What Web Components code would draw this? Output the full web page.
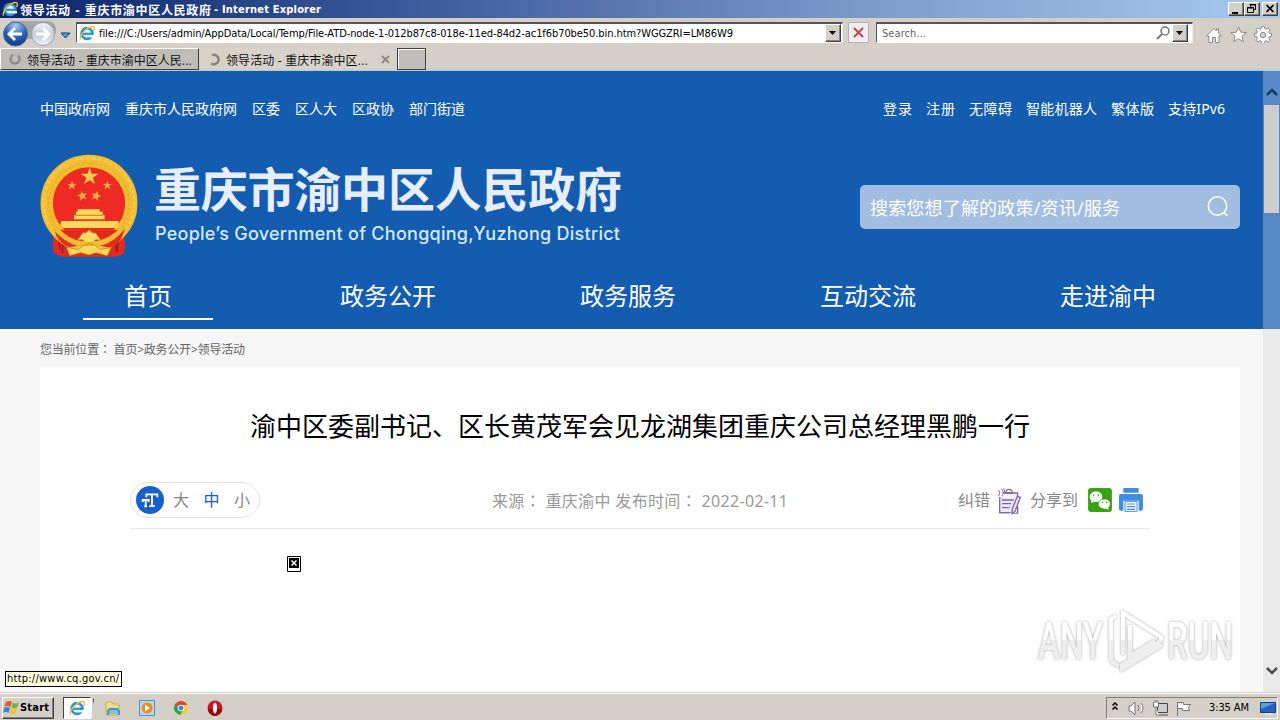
<!DOCTYPE html>
<html lang="zh-CN">
<head>
<meta charset="utf-8">
<title>领导活动 - 重庆市渝中区人民政府</title>
<style>
  html, body { margin: 0; width: 1280px; height: 720px; overflow: hidden; }
  body { background: #d4d0c8; }
</style>
</head>
<body>
<ie-window>
  <ie-titlebar slot="chrome"></ie-titlebar>
  <ie-addressbar slot="chrome"></ie-addressbar>
  <ie-tabstrip slot="chrome"></ie-tabstrip>
  <gov-page></gov-page>
  <page-scrollbar slot="over"></page-scrollbar>
  <run-watermark slot="over"></run-watermark>
  <status-tip slot="over">http://www.cq.gov.cn/</status-tip>
  <task-bar slot="taskbar"></task-bar>
</ie-window>

<script>
/**
 * Registers an element whose shadow root is cloned from the given markup.
 * @param {string} name
 * @param {string} html
 */
function component(name, html) {
  const template = document.createElement('template');
  template.innerHTML = html;
  customElements.define(name, class extends HTMLElement {
    constructor() {
      super();
      this.attachShadow({ mode: 'open' }).appendChild(template.content.cloneNode(true));
    }
  });
}

const ieLogo = /*html*/ `
  <svg viewBox="0 0 16 16" width="16" height="16">
    <circle cx="8" cy="8.6" r="5.4" fill="#e9f7ff" stroke="#2493dc" stroke-width="2.7"/>
    <path d="M4 8.8h9" stroke="#2493dc" stroke-width="2.2"/>
    <path d="M10 10.1h5v2.3h-5z" fill="#fff"/>
    <path d="M1.6 14.7C-.4 11 8.500 1 14 1.500c2 .3 1.500 3 .5 4.500" fill="none" stroke="#f2bd30" stroke-width="1.400"/>
  </svg>`;

component('ie-window', /*html*/ `
  <style>
    :host { display: flex; flex-direction: column; width: 1280px; height: 720px; position: relative; font-family: "DejaVu Sans Condensed", "Noto Sans CJK SC", sans-serif; font-size: 11px; }
    main { height: 621px; overflow: hidden; background: #f6f6f6; }
  </style>
  <slot name="chrome"></slot>
  <main><slot></slot></main>
  <slot name="over"></slot>
  <slot name="taskbar"></slot>
`);

component('ie-titlebar', /*html*/ `
  <style>
    :host { display: flex; align-items: center; height: 18px; box-sizing: border-box; padding: 0 2px 0 2px; gap: 2px; color: #fff; font-weight: bold; background: linear-gradient(90deg, #0a246a, #3f5f9f 35%, #7d9bcb 68%, #a6caf0); }
    .title { flex: 1; display: flex; align-items: center; gap: 3px; }
    .doc { font-size: 12px; }
    .buttons { display: flex; }
    i { box-sizing: border-box; width: 16px; height: 14px; background: #d4d0c8; border: 1px solid; border-color: #fff #404040 #404040 #fff; box-shadow: inset -1px -1px #808080; }
    i:last-child { margin-left: 2px; }
    svg { display: block; }
  </style>
  ${ieLogo}
  <div class="title">
    <fit-text class="doc" width="191">领导活动 - 重庆市渝中区人民政府</fit-text>
    <fit-text width="107">- Internet Explorer</fit-text>
  </div>
  <div class="buttons">
    <i><svg width="14" height="12"><path d="M3 9h6v2H3z"/></svg></i>
    <i><svg width="14" height="12" fill="none" stroke="#000"><path d="M5 2h6M5.500 1v3M4.500 1.500h6v5h-2M2.500 5h6M2.500 4.500h6v5h-6z"/></svg></i>
    <i><svg width="14" height="12"><path d="M3.500 2l7 7M10.500 2l-7 7" stroke="#000" stroke-width="1.700"/></svg></i>
  </div>
`);

component('ie-addressbar', /*html*/ `
  <style>
    :host { display: flex; align-items: center; height: 30px; box-sizing: border-box; padding: 0 7px 1px 2px; background: #d4d0c8; color: #000; }
    .nav { width: 74px; height: 28px; }
    .field { display: flex; align-items: center; box-sizing: border-box; height: 21px; background: #fff; border: 1px solid; border-color: #555 #eee #fff #555; border-top-width: 2px; padding: 0 1px 0 2px; }
    .address { width: 767px; gap: 4px; }
    .search { width: 317px; margin-left: 7px; padding: 0 4px 0 5px; color: #666; }
    .grow { flex: 1; }
    .drop { box-sizing: border-box; width: 16px; height: 18px; background: #d4d0c8; border: 1px solid; border-color: #fff #404040 #404040 #fff; box-shadow: inset -1px -1px #888; }
    .stop { box-sizing: border-box; width: 21px; height: 21px; background: #eeeef0; border: 1px solid #b4b4b8; margin-left: 5px; }
    svg { display: block; flex: none; }
    .tools { margin-left: 12px; }
  </style>
  <svg class="nav" viewBox="0 18 74 28">
    <defs><radialGradient id="b" cx=".5" cy=".15" r=".9"><stop offset="0" stop-color="#a8cdf2"/><stop offset=".5" stop-color="#2a68bd"/><stop offset="1" stop-color="#072f80"/></radialGradient>
    <linearGradient id="g" x2="0" y2="1"><stop offset="0" stop-color="#f6f6f6"/><stop offset=".5" stop-color="#c4ccd8"/><stop offset="1" stop-color="#eef4fb"/></linearGradient></defs>
    <path d="M9 20h36q10 0 9 12L44 38H18L2 32z" fill="#a5a6aa"/>
    <circle cx="13.500" cy="33" r="12" fill="url(#b)" stroke="#566c91"/>
    <path d="M20 33H8M13 27l-6 6 6 6" fill="none" stroke="#fff" stroke-width="2.800"/>
    <circle cx="41" cy="33" r="11.500" fill="url(#g)" stroke="#9a9fa8"/>
    <path d="M34 33h12M41 27l6 6-6 6" fill="none" stroke="#fff" stroke-width="3"/>
    <path d="M59 32h9l-4.500 5z" fill="#3f9fe8" stroke="#164478"/>
  </svg>
  <div class="field address">${ieLogo}
    <fit-text width="634">file:///C:/Users/admin/AppData/Local/Temp/File-ATD-node-1-012b87c8-018e-11ed-84d2-ac1f6b70be50.bin.htm?WGGZRI=LM86W9</fit-text>
    <span class="grow"></span>
    <svg class="drop" viewBox="0 0 14 16"><path d="M3 6h7l-3.500 4z"/></svg>
  </div>
  <svg class="stop" viewBox="0 0 19 19"><path d="M5 5l9 9M14 5l-9 9" stroke="#c9444d" stroke-width="2"/></svg>
  <div class="field search"><fit-text width="44">Search...</fit-text><span class="grow"></span>
    <svg width="16" height="16" fill="none" stroke="#777"><circle cx="9" cy="6" r="4" stroke-width="1.500"/><path d="M6 9l-5 5" stroke-width="2"/></svg>
    <svg class="drop" viewBox="0 0 14 16"><path d="M3 6h7l-3.500 4z"/></svg>
  </div>
  <svg class="tools" width="68" height="20" viewBox="0 0 68 20" fill="#fff" stroke="#8c8c8c">
    <path d="M1.500 13L9 5.500l2.500 2.500V6h2v4l3 3h-2.500v6.500h-3.500v-5H7.500v5H4V13z"/>
    <path d="M33.500 4l2.200 5.200 5.600.4-4.300 3.600 1.400 5.500-4.900-3-4.800 3 1.300-5.500-4.300-3.600 5.700-.4z"/>
    <path d="M56.700 4h2.600l.5 2.200 1.400.6 2-1.300 1.800 1.800-1.300 2 .6 1.400 2.200.5v2.600l-2.200.5-.6 1.400 1.300 2-1.800 1.800-2-1.300-1.400.6-.5 2.200h-2.600l-.5-2.200-1.400-.6-2 1.300-1.800-1.800 1.300-2-.6-1.400-2.200-.5v-2.600l2.200-.5.6-1.400-1.300-2 1.800-1.800 2 1.300 1.400-.6z" transform="translate(0 -.5)"/>
    <circle cx="58" cy="12" r="2.700" fill="#d4d0c8"/>
  </svg>
`);

component('ie-tabstrip', /*html*/ `
  <style>
    :host { display: flex; align-items: flex-start; height: 23px; box-sizing: border-box; background: #d4d0c8; border-bottom: 2px solid #b5cbe2; font-size: 12px; color: #111; }
    .tab { display: flex; align-items: center; box-sizing: border-box; height: 22px; gap: 5px; padding: 0 4px 0 8px; width: 199px; background: #c0bdb6; border: 1px solid; border-color: #fff #404040 #404040 #fff; }
    .active { background: #d9d2c9; border-color: #d4d0c8; width: 198px; }
    .new { width: 29px; height: 22px; box-sizing: border-box; background: #c0bdb6; border: 1px solid #404040; box-shadow: inset 1px 1px #fff; }
    svg { display: block; flex: none; }
    .close { margin-left: 8px; }
  </style>
  <div class="tab">
    <svg width="13" height="13" fill="none" stroke="#8b8b8b" stroke-width="2.500"><circle cx="6" cy="6" r="4.500"/><path d="M4 1.800A4.500 4.500 0 0 1 9 2.500" stroke="#c0bdb6"/></svg>
    <fit-text width="165">领导活动 - 重庆市渝中区人民...</fit-text>
  </div>
  <div class="tab active">
    <svg width="13" height="13" fill="none" stroke="#858585" stroke-width="2.500"><path d="M4 2.100A4.800 4.800 0 1 1 3 10.500"/></svg>
    <fit-text width="142">领导活动 - 重庆市渝中区...</fit-text>
    <svg class="close" width="10" height="10"><path d="M1 2l7 7M8 2l-7 7" stroke="#8a8a8a" stroke-width="2"/></svg>
  </div>
  <div class="new"></div>
`);

component('gov-links', /*html*/ `
  <style>
    :host { display: flex; gap: 15px; font-size: 14px; line-height: 20px; color: #fff; }
  </style>
  <slot></slot>
`);

component('gov-logo', /*html*/ `
  <style>
    :host { display: flex; gap: 16px; color: #e7edfa; }
    .names { padding-top: 6px; }
    .cn { font-size: 47px; line-height: 56px; font-weight: 700; }
    .en { font: 500 18px/24px Inter, sans-serif; color: #d6e9fc; margin: 5px 0 0 1px; }
    svg { display: block; margin-top: -1px; }
  </style>
  <svg width="98" height="105" viewBox="119 222 294 315">
    <path d="M165 440q-12 50-5 76 10 14 35 14h138q34 0 39-14 5-35-6-76z" fill="#e12a20"/>
    <path d="M171 462l9 48M188 485l-2 36M357 462l-8 55M343 485l8 32" stroke="#a51717" stroke-width="4"/>
    <circle cx="266" cy="370" r="127" fill="#ed2b24" stroke="#f2bd31" stroke-width="37"/>
    <circle cx="266" cy="370" r="136" fill="none" stroke="#f9ca48" stroke-width="8" stroke-dasharray="13 5"/>
    <circle cx="266" cy="370" r="121" fill="none" stroke="#e2aa22" stroke-width="3" stroke-dasharray="9 5"/>
    <path d="M268 263l6 18h20l-16 12 6 19-16-11-17 11 7-19-17-12h20z" fill="#f8cc50"/>
    <path d="M215 302l3 9 11 1-9 6 3 10-8-6-10 6 4-10-8-6h11zM322 303l2 9h11l-9 6 4 10-9-6-9 6 4-10-8-6 10-1zM244 333l5 9 11-2-7 8 6 10-11-4-8 8v-11l-10-5 11-3zM292 333l1 11 10 3-10 5v10l-8-8-10 4 5-10-6-8 10 2z" fill="#f6ad46"/>
    <path d="M232 388h66v7h9v10h6v13h-92v-13h6v-10h5zM183 423h172v11l-5 10H187l-7-10z" fill="#ffd85d"/>
    <path d="M225 406h83M219 419h93" stroke="#ce7a20" stroke-width="3"/>
    <path d="M161 447q53 7 105 7t107-7q-12 51-51 55l-56-10-58 10q-36-11-47-55z" fill="#e22c20"/>
    <path d="M171 440q30 37 75 44l20-10 20 10q46-9 76-44l10 8q-31 41-76 51l-30-8-32 8q-45-14-74-49z" fill="#f2bc32"/>
    <path d="M239 471l9-13 9 1 9-8 11 8h9l8 12 7 10q-18-7-22 6h-24q-7-14-24-5z" fill="#ffdd69" stroke="#d99b1f" stroke-width="2"/>
    <path d="M198 501l36 8 17-14h32l18 14 32-7-12 25-34-9-21 7-25-7-33 9z" fill="#ffd75d" stroke="#bc761c" stroke-width="2"/>
  </svg>
  <div class="names">
    <div class="cn"><fit-text width="468">重庆市渝中区人民政府</fit-text></div>
    <div class="en"><fit-text width="465">People’s Government of Chongqing,Yuzhong District</fit-text></div>
  </div>
`);

component('gov-search', /*html*/ `
  <style>
    :host { display: flex; align-items: center; justify-content: space-between; box-sizing: border-box; width: 380px; height: 44px; padding: 0 10px; border-radius: 5px; background: #a1bde0; color: #fff; font-size: 18px; line-height: 28px; }
    svg { display: block; }
    fit-text { position: relative; top: 1px; }
  </style>
  <fit-text width="250"><slot></slot></fit-text>
  <svg width="24" height="24" fill="none" stroke="#fff" stroke-width="1.500"><circle cx="11.500" cy="11" r="9.200"/><path d="M18 17.500l3.500 3.500"/></svg>
`);

component('gov-nav', /*html*/ `
  <style>
    :host { display: grid; grid-template-columns: repeat(5, 240px); padding-left: 28px; color: #fff; font-size: 24px; line-height: 38px; }
    ::slotted(*) { box-sizing: border-box; width: 130px; height: 43px; justify-self: center; text-align: center; white-space: nowrap; }
    ::slotted(.current) { border-bottom: 2px solid #fff; }
  </style>
  <slot></slot>
`);

component('gov-header', /*html*/ `
  <style>
    :host { display: block; height: 258px; background: #135cb0; }
    .top { display: flex; justify-content: space-between; padding: 28px 38px 0 40px; height: 55px; box-sizing: border-box; }
    .brand { display: flex; justify-content: space-between; padding: 29px 23px 0 40px; height: 151px; box-sizing: border-box; }
    gov-search { margin-top: 30px; }
    .right { gap: 14px; }
  </style>
  <div class="top">
    <gov-links>
      <fit-text width="70">中国政府网</fit-text><fit-text width="112">重庆市人民政府网</fit-text><fit-text width="28">区委</fit-text><fit-text width="42">区人大</fit-text><fit-text width="42">区政协</fit-text><fit-text width="56">部门街道</fit-text>
    </gov-links>
    <gov-links class="right">
      <fit-text width="29">登录</fit-text><fit-text width="29">注册</fit-text><fit-text width="43">无障碍</fit-text><fit-text width="71">智能机器人</fit-text><fit-text width="43">繁体版</fit-text><fit-text width="57">支持IPv6</fit-text>
    </gov-links>
  </div>
  <div class="brand"><gov-logo></gov-logo><gov-search>搜索您想了解的政策/资讯/服务</gov-search></div>
  <gov-nav><span class="current">首页</span><span>政务公开</span><span>政务服务</span><span>互动交流</span><span>走进渝中</span></gov-nav>
`);

component('font-sizer', /*html*/ `
  <style>
    :host { display: flex; align-items: center; box-sizing: border-box; width: 130px; height: 36px; padding: 0 5px; border: 1px solid #e4e4e4; border-radius: 18px; color: #888; font-size: 16px; line-height: 24px; }
    svg { display: block; margin-right: 9px; flex: none; }
    span { width: 30.500px; flex: none; }
    span:last-child { width: 16px; }
    .on { color: #135cd0; }
  </style>
  <svg width="28" height="28" viewBox="48 258 84 84"><circle cx="90" cy="300" r="42" fill="#1760cc"/>
    <path d="M79 292v-9h33v9M96 283v34M88 318h16M68 306v-6h18v6M77 300v18M73 319h8" fill="none" stroke="#fff" stroke-width="5.500"/></svg>
  <span>大</span><span class="on">中</span><span>小</span>
`);

component('share-tools', /*html*/ `
  <style>
    :host { display: flex; align-items: center; font-size: 16px; line-height: 24px; color: #888; }
    svg { display: block; flex: none; }
    .note { margin: 3px 8px 0; }
    .wechat { margin: 0 7px 0 10px; }
  </style>
  <fit-text width="32">纠错</fit-text>
  <svg class="note" width="24" height="27" viewBox="294 56 72 81" fill="none" stroke="#7c6b9f" stroke-width="4">
    <path d="M310 71h43v13M300 83v47h29M353 111v20h-15" fill="#eee8ff"/>
    <path d="M300 84h49v47h-49z" fill="#eee8ff" stroke="none"/>
    <path d="M317 71q1-11 10-11t10 11zM306 92h35M306 103h27M306 115h23M299 84v46h33"/>
    <path d="M361 84l-16 42-9 7 1-15 15-37z" fill="#eee8ff"/>
    <path d="M296 62q7 8 0 18M304 58q10 11 1 23M311 57q5 8 1 15" stroke-width="3"/>
  </svg>
  <fit-text width="48">分享到</fit-text>
  <svg class="wechat" width="24" height="24" viewBox="564 54 72 72">
    <rect x="565" y="55" width="70" height="70" rx="9" fill="#38a312" stroke="#278b08" stroke-width="2"/>
    <ellipse cx="588" cy="80" rx="19" ry="16" fill="#fff"/><path d="M573 99l3-12 12 7z" fill="#fff"/>
    <ellipse cx="613" cy="102" rx="18" ry="15" fill="#fff" stroke="#38a312" stroke-width="2"/><path d="M626 119l-12-4 10-6z" fill="#fff"/>
    <g fill="#38a312"><circle cx="581" cy="75" r="2.500"/><circle cx="595" cy="75" r="2.500"/><circle cx="607" cy="97" r="2.500"/><circle cx="620" cy="97" r="2.500"/></g>
  </svg>
  <svg width="24" height="24" viewBox="657 54 72 72">
    <path d="M670 54h46v14h-46zM662 72h62q5 0 5 6v38q0 6-6 6h-7V92h-46v30h-7q-6 0-6-6V78q0-6 5-6z" fill="#438de0"/>
    <path d="M675 94h36v31h-36z" fill="#fff" stroke="#438de0" stroke-width="3"/><path d="M680 102h26M680 110h26M680 118h26" stroke="#438de0" stroke-width="3.500"/>
  </svg>
`);

component('gov-article', /*html*/ `
  <style>
    :host { display: block; box-sizing: border-box; width: 1200px; height: 330px; margin-left: 40px; padding: 39px 90px 0; background: #fff; }
    h1 { display: flex; justify-content: center; margin: 0; font-size: 26px; line-height: 40px; font-weight: 400; color: #000; }
    .meta { display: grid; grid-template-columns: 362px 1fr auto; align-items: center; height: 46px; padding-right: 7px; margin-top: 31px; box-sizing: border-box; }
    .source { font-size: 16px; line-height: 24px; color: #999; }
    .colon { font-family: "Noto Sans CJK TC", sans-serif; }
    hr { margin: 5px 0 27px; border: 0; height: 1px; background: #e8e8e8; }
    .missing { display: block; margin-left: 157px; }
  </style>
  <h1><fit-text width="780"><slot></slot></fit-text></h1>
  <div class="meta">
    <font-sizer></font-sizer>
    <fit-text class="source" width="296">来源<span class="colon" lang="zh-TW">：</span> 重庆渝中 发布时间<span class="colon" lang="zh-TW">：</span> 2022-02-11</fit-text>
    <share-tools></share-tools>
  </div>
  <hr>
  <svg class="missing" width="14" height="16"><path d="M.5.500h13v15H.5z" fill="#fff" stroke="#000"/><path d="M2 2h10v10H2z"/><path d="M4.500 4.500l5 5M9.500 4.500l-5 5" stroke="#fff" stroke-width="1.500"/></svg>
`);

component('gov-page', /*html*/ `
  <style>
    :host { display: block; width: 1280px; font-family: "Noto Sans", "Noto Sans CJK SC", sans-serif; }
    gov-header { width: 1263px; box-shadow: 17px 0 #135cb0; }
    .crumbs { height: 38px; box-sizing: border-box; border-top: 1px solid #fff; padding: 9px 0 0 40px; font-size: 12px; line-height: 20px; color: #666; }
    .colon { font-family: "Noto Sans CJK TC", sans-serif; }
  </style>
  <gov-header></gov-header>
  <div class="crumbs"><fit-text width="205">您当前位置<span class="colon" lang="zh-TW">：</span> 首页&gt;政务公开&gt;领导活动</fit-text></div>
  <gov-article>渝中区委副书记、区长黄茂军会见龙湖集团重庆公司总经理黑鹏一行</gov-article>
`);

component('page-scrollbar', /*html*/ `
  <style>
    :host { position: absolute; left: 1263px; top: 71px; width: 17px; height: 621px; display: flex; flex-direction: column; background: linear-gradient(#5889c5 258px, #e9e9e9 258px); }
    svg { display: block; height: 34px; }
    .thumb { width: 15px; height: 108px; margin-left: 1px; background: #cdcdcd; }
    .track { flex: 1; }
  </style>
  <svg width="17" fill="none" stroke="#173a63" stroke-width="2.500"><path d="M4 24l5-5 5 5"/></svg>
  <div class="thumb"></div>
  <div class="track"></div>
  <svg width="17" fill="none" stroke="#505050" stroke-width="2.500"><path d="M4 10l5 5 5-5"/></svg>
`);

component('run-watermark', /*html*/ `
  <style>
    :host { position: absolute; left: 1032px; top: 604px; }
    svg { display: block; overflow: visible; filter: drop-shadow(0 0 1.500px rgba(0,0,0,.34)); }
    text { font: 500 51px Roboto, sans-serif; fill: url(#f); }
  </style>
  <svg width="240" height="72">
    <defs><linearGradient id="f" gradientUnits="userSpaceOnUse" x1="0" y1="0" x2="0" y2="72"><stop offset=".5" stop-color="#fff"/><stop offset=".5" stop-color="#efefef"/></linearGradient></defs>
    <text x="6" y="55" textLength="65" lengthAdjust="spacingAndGlyphs">ANY</text>
    <text x="135" y="55" textLength="66" lengthAdjust="spacingAndGlyphs">RUN</text>
    <g fill="none" stroke="url(#f)" stroke-width="4"><path d="M91 51V9l38 24v4L90 61v4l40-24M79 57V15l5-3M79 57l8 5M98 21v31l25-15"/></g>
  </svg>
`);

component('status-tip', /*html*/ `
  <style>
    :host { position: absolute; left: 5px; top: 671px; box-sizing: border-box; width: 117px; height: 16px; padding: 0 1px; line-height: 14px; color: #000; background: #ffffe1; border: 1px solid #000; }
  </style>
  <fit-text width="112"><slot></slot></fit-text>
`);

component('task-bar', /*html*/ `
  <style>
    :host { display: flex; align-items: center; box-sizing: border-box; height: 28px; padding: 2px 2px 0 2px; background: #d4d0c8; border-top: 1px solid #d4d0c8; box-shadow: inset 0 1px #fff; color: #000; }
    svg { display: block; flex: none; }
    .start { display: flex; align-items: center; box-sizing: border-box; width: 52px; height: 22px; padding-left: 0; border: 1px solid; border-color: #fff #404040 #404040 #fff; box-shadow: inset -1px -1px #808080; font-weight: bold; }
    .ie { display: flex; align-items: center; justify-content: center; box-sizing: border-box; width: 28px; height: 22px; margin-left: 9px; background: #fff; border: 1px solid; border-color: #404040 #fff #fff #404040; }
    .apps { display: flex; gap: 18px; margin-left: 11px; flex: 1; }
    .tray { display: flex; align-items: center; box-sizing: border-box; width: 172px; height: 22px; padding: 0 1px 0 4px; border: 1px solid; border-color: #808080 #fff #fff #808080; }
    .clock { margin-left: 14px; flex: 1; }
  </style>
  <div class="start">
    <svg width="17" height="17" viewBox="0 0 17 17"><path d="M3 3q3-2 6 0L7.500 8q-3-2-6 0z" fill="#e65a24"/><path d="M10 3.500q3 2 6 0L14 8.500q-2 2-5.500 0z" fill="#77b52b"/><path d="M1 9q3-2 6 0l-1.500 5q-3-2-5.500 0z" fill="#3d86d6"/><path d="M8 9.500q3 2 6 0l-1.500 5q-3 2-6 0z" fill="#f5c229"/></svg>
    <fit-text width="29">Start</fit-text>
  </div>
  <div class="ie">${ieLogo}</div>
  <svg width="3" height="20"><path d="M.5 0v20" stroke="#fff"/><path d="M2 1h1v4" stroke="#555"/></svg>
  <div class="apps">
    <svg width="16" height="16"><path d="M1 2h6l1 2h6v11H1z" fill="#f1dc87" stroke="#cfac48"/><path d="M3 8h11v6H3z" fill="#7bc2e6"/><path d="M3 15v-4l2-2h7l2 2v4" fill="none" stroke="#3c9dd0" stroke-width="2"/></svg>
    <svg width="16" height="16"><path d="M.5.500h15v15H.5z" fill="#b8d8f1" stroke="#4e90c8"/><circle cx="8" cy="8" r="5.500" fill="#f58a16"/><path d="M6 4.500l5 3.500-5 3.500z" fill="#fff"/></svg>
    <svg width="16" height="16"><circle cx="8" cy="8" r="7" fill="#f7cc33"/><path d="M8 8L1.500 5Q4 1 8 1t6.500 4H8z" fill="#dc4535"/><path d="M1.500 5Q-1 12 7 15l3-5-2-2z" fill="#30a04c"/><circle cx="8" cy="8" r="3.300" fill="#fff"/><circle cx="8" cy="8" r="2.500" fill="#4087e7"/></svg>
    <svg width="16" height="16"><circle cx="8" cy="8" r="7.500" fill="#c91620"/><path d="M1 9a7 7 0 0 0 14 0z" fill="#98050d"/><ellipse cx="8" cy="8" rx="2" ry="5.500" fill="#fff"/></svg>
  </div>
  <div class="tray">
    <svg width="84" height="20" viewBox="0 0 84 20" fill="#fff" stroke="#777">
      <path d="M1.500 7.500L4 5l2.500 2.500M1.500 11.500L4 9l2.500 2.500" fill="none" stroke="#000" stroke-width="1.500"/>
      <path d="M18 8h2l4-4v13l-4-4h-2zM27 7q2 3 0 6M30 5q4 5 0 10" />
      <path d="M46.500 5.500h10v9h-10z" fill="#ccc" stroke="#444"/><path d="M48 17h9" stroke="#555"/><path d="M42.500 4v5h5V4M44 2v3M46 2v3M45 9v8h3"/>
      <path d="M66.500 18V4M66.500 4.500h6v2h7l-2 3 1 3h-7v-2h-5"/>
    </svg>
    <div class="clock"><fit-text width="40">3:35 AM</fit-text></div>
    <svg width="16" height="16"><path d="M.5 2.500h15v10H.5z" fill="#2861bd" stroke="#163f86"/><path d="M1 3h14L1 9z" fill="#5aa0e4"/><path d="M5 14h7" stroke="#d7e8f8" stroke-width="2"/></svg>
  </div>
`);

/**
 * Inline label that spreads its letters over a fixed width.
 * Defined last so that fonts from every parent root already apply.
 */
class FitText extends HTMLElement {
  constructor() {
    super();
    this.attachShadow({ mode: 'open' }).innerHTML = /*html*/ `
      <style>
        :host { display: block; white-space: nowrap; flex: none; }
        span { display: inline-block; }
      </style>
      <span><slot></slot></span>
    `;
  }

  connectedCallback() {
    const width = Number(this.getAttribute('width'));
    const label = this.shadowRoot.querySelector('span');
    const nodes = this.shadowRoot.querySelector('slot').assignedNodes({ flatten: true });
    const length = nodes.map(n => n.textContent).join('').trim().length;
    const natural = label.getBoundingClientRect().width;
    this.style.width = width + 'px';
    label.style.letterSpacing = (width - natural) / Math.max(1, length - 1) + 'px';
  }
}

customElements.define('fit-text', FitText);
</script>
</body>
</html>
